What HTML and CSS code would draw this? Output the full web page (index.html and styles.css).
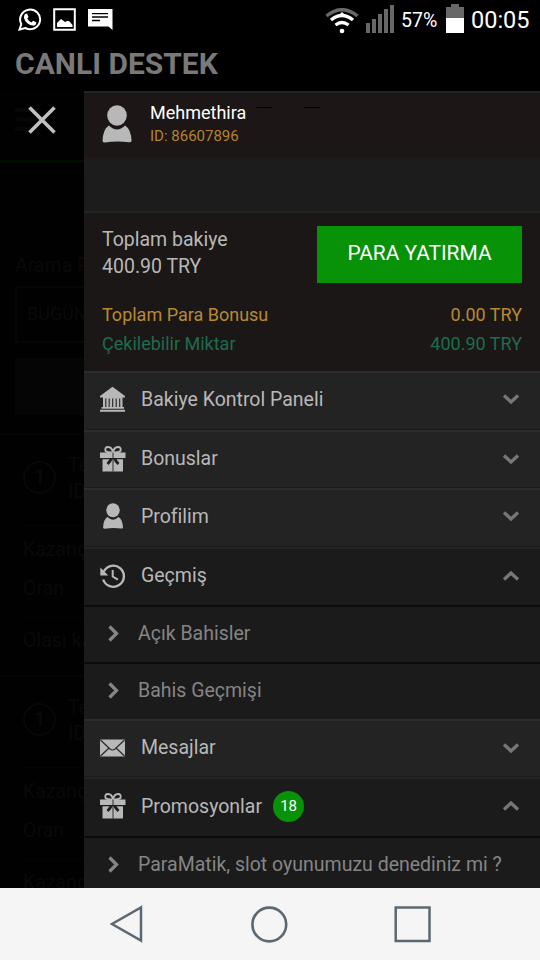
FILE: index.html
```html
<!DOCTYPE html>
<html lang="tr">
<head>
<meta charset="utf-8">
<title>Canlı Destek</title>
<link rel="stylesheet" href="styles.css">
</head>
<body>
<svg class="defs" aria-hidden="true">
  <symbol id="down" viewBox="0 0 18 12"><path d="M2 2.500l7 6.500 7-6.500" fill="none" stroke="currentColor" stroke-width="3.300"/></symbol>
  <symbol id="up" viewBox="0 0 18 12"><path d="M2 9.500l7-6.500 7 6.500" fill="none" stroke="currentColor" stroke-width="3.300"/></symbol>
  <symbol id="right" viewBox="0 0 11 17"><path d="M1.500 1.500L8.500 8.500l-7 7" fill="none" stroke="currentColor" stroke-width="3.300"/></symbol>
  <symbol id="user" viewBox="0 0 30 38"><ellipse cx="15" cy="10.500" rx="9.800" ry="10.300" fill="currentColor"/><path d="M7 20.500Q15 28.500 23 20.500Q29 24 29.600 36Q29 37.500 27 37.200Q15 35.500 3 37.500Q.8 37.500.5 36Q1 24 7 20.500Z" fill="currentColor"/></symbol>
  <symbol id="gift" viewBox="0 0 26 26"><path d="M0 6.500h25.500V12H0zM2.500 13.200h20.500v12.300h-20.500z" fill="currentColor"/><path d="M13 6.500Q7 6.500 5.500 5Q4.500 1 8 1Q12 1 13 6.500Q14 1 18 1Q21.500 1 20.500 5Q19 6.500 13 6.500Z" fill="none" stroke="currentColor" stroke-width="1.800"/><path d="M13 6.500v19" fill="none" stroke="#202020" stroke-width=".9"/><path d="M11.500 12.200Q10.500 15 7.500 18M14.500 12.200Q15.500 15 18.500 18" fill="none" stroke="#202020" stroke-width="2.800"/></symbol>
</svg>
<div class="phone">
  <header class="status">
    <div class="notes">
      <svg width="24" height="24" viewBox="0 0 24 24"><path d="M1.500 21.500l1.800-5.500a10 9.800 0 1 1 4 4z" fill="none" stroke="#fff" stroke-width="2"/><path d="M7 6l2-.5 1.500 3.500-1.200 1.500q1.500 3 4.200 4l1.500-1.800 3.200 1.600q.3 3-2.700 3.500Q8 17 6 10q-.2-2.500 1-4z" fill="#fff"/></svg>
      <svg width="23" height="23" viewBox="0 0 23 23"><path d="M1.200 1.200h20.600v20.600H1.200z" fill="none" stroke="#fff" stroke-width="2"/><path d="M4 19v-4l4-4 4 3 2-1h2l3.500 4v2z" fill="#fff"/></svg>
      <svg width="25" height="23" viewBox="0 0 25 23"><path d="M0 1h24.500v21l-4-3.500H0z" fill="#fff"/><path d="M4 5.700h16M4 9h16M4 12.500h8" stroke="#000" stroke-width="1.300"/></svg>
    </div>
    <div class="indicators">
      <svg width="34" height="26" viewBox="0 0 34 26"><path d="M1.500 8Q17-4.500 32.500 8" fill="none" stroke="#686868" stroke-width="3.500"/><path d="M6 12Q17 3 28 12M10.500 17Q17 12 23.500 17" fill="none" stroke="#fff" stroke-width="3.300"/><path d="M12 9l5-5 5 5z" fill="#fff"/><circle cx="17" cy="23" r="2.300" fill="#fff"/></svg>
      <svg class="signal" width="28" height="28" viewBox="0 0 28 28"><path d="M0 18h4v10H0zM6 14h4v14H6zM12 9h4v19h-4zM18 4h4v24h-4zM24 0h4v28h-4z" fill="#686868"/></svg>
      <span class="percent">57%</span>
      <svg class="battery" width="18" height="29" viewBox="0 0 18 29"><path d="M5 0h8v3h5v11H0V3h5z" fill="#686868"/><path d="M0 14h18v15H0z" fill="#fff"/></svg>
      <span class="clock">00:05</span>
    </div>
  </header>
  <h1 class="title">CANLI DESTEK</h1>
  <main class="content">
    <aside class="backdrop">
      <div class="close"><svg width="54" height="30" viewBox="0 0 54 30"><path d="M0 5h24M0 14.500h24M0 24h24" stroke="#070707" stroke-width="4"/><path d="M14.500 2.500l25 25M39.500 2.500l-25 25" stroke="#c0c0c0" stroke-width="3.600"/></svg></div>
      <div class="stripe"></div>
      <div class="search">Arama P</div>
      <div class="date">BUGÜN</div>
      <div class="submit"></div>
      <div class="bet"><div class="bethead"><b class="num">1</b><span>Te<br>ID</span></div><p>Kazanç</p><p>Oran</p><p class="possible">Olası ka</p></div>
      <div class="bet"><div class="bethead"><b class="num">1</b><span>Te<br>ID</span></div><p>Kazanç</p><p>Oran</p><p class="possible">Kazanç</p></div>
    </aside>
    <section class="drawer">
      <div class="profile">
        <svg width="30" height="38"><use href="#user"/></svg>
        <div><div class="name"><span>Mehmethira</span><i></i><i></i></div><div class="id">ID: 86607896</div></div>
      </div>
      <div class="gap"></div>
      <div class="balance">
        <div class="total"><div class="sum"><span class="label">Toplam bakiye</span><br><span class="amount">400.90 TRY</span></div><button><span>PARA YATIRMA</span></button></div>
        <div class="line bonus"><span>Toplam Para Bonusu</span><span>0.00 TRY</span></div>
        <div class="line draw"><span>Çekilebilir Miktar</span><span>400.90 TRY</span></div>
      </div>
      <nav>
        <div class="row h59"><svg class="ico" viewBox="0 0 26 26"><path d="M12.500 .8L25 10v1.500H0V10zM3 11h19.500v10H3zM1.500 21h22.500v1.800H1.500zM0 23.700h25v2H0z" fill="currentColor"/><path d="M5.800 12.500v8.500M9.200 12.500v8.500M12.700 12.500v8.500M16.200 12.500v8.500M19.700 12.500v8.500" stroke="#222" stroke-width="1.100"/></svg><span>Bakiye Kontrol Paneli</span><svg class="chev"><use href="#down"/></svg></div>
        <div class="row"><svg class="ico"><use href="#gift"/></svg><span>Bonuslar</span><svg class="chev"><use href="#down"/></svg></div>
        <div class="row h59"><svg class="ico person"><use href="#user"/></svg><span>Profilim</span><svg class="chev"><use href="#down"/></svg></div>
        <div class="row open"><svg class="ico" viewBox="0 0 26 26"><path d="M3.800 8.500A10.600 10.600 0 1 1 3.200 16.500" fill="none" stroke="currentColor" stroke-width="2.400"/><path d="M.3 4.500v8h8z" fill="currentColor"/><path d="M12.700 7v6.500l5.200 3.200" fill="none" stroke="currentColor" stroke-width="2"/></svg><span>Geçmiş</span><svg class="chev"><use href="#up"/></svg></div>
        <div class="sub"><svg><use href="#right"/></svg><span>Açık Bahisler</span></div>
        <div class="sub"><svg><use href="#right"/></svg><span>Bahis Geçmişi</span></div>
        <div class="row"><svg class="ico" viewBox="0 0 26 26"><path d="M0 4.500h25v17H0z" fill="currentColor"/><path d="M.5 5l9.500 9q2.500 2 5 0l9.500-9M.5 21l8.500-8M24.500 21l-8.500-8" fill="none" stroke="#282828" stroke-width="1.200"/></svg><span>Mesajlar</span><svg class="chev"><use href="#down"/></svg></div>
        <div class="row open h59 promo"><svg class="ico"><use href="#gift"/></svg><span>Promosyonlar</span><b class="badge">18</b><svg class="chev"><use href="#up"/></svg></div>
        <div class="sub last"><svg><use href="#right"/></svg><span>ParaMatik, slot oyunumuzu denediniz mi ?</span></div>
      </nav>
    </section>
  </main>
  <footer class="keys">
    <svg width="34" height="38" viewBox="0 0 34 38"><path d="M31 2.500v33L2 19z" fill="none" stroke="#5b6872" stroke-width="2.500"/></svg>
    <svg width="38" height="38" viewBox="0 0 38 38"><circle cx="19.300" cy="19.500" r="16.900" fill="none" stroke="#5b6872" stroke-width="2.600"/></svg>
    <svg width="38" height="38" viewBox="0 0 38 38"><path d="M1.700 2.500h33.800v33.600H1.700z" fill="none" stroke="#5b6872" stroke-width="2.500"/></svg>
  </footer>
</div>
</body>
</html>
```
FILE: styles.css
```css
* { box-sizing: border-box; }
body { margin: 0; background: #000; font-family: Roboto, sans-serif; }
svg { display: block; flex: none; }
.defs { display: none; }
.phone { width: 540px; height: 960px; overflow: hidden; display: flex; flex-direction: column; }
.status { height: 40px; flex: none; display: flex; justify-content: space-between; padding: 4px 11px 0 18px; color: #fff; }
.notes { display: flex; gap: 12px; padding-top: 4px; }
.notes svg:nth-child(2) { margin-left: -1px; }
.indicators { display: flex; }
.indicators > svg:first-child { margin: 4px 1px 0 -1px; }
.signal { margin: 1px 0 0 6px; }
.percent { width: 37px; margin-left: 7px; font-size: 19.600px; line-height: 33px; }
.battery { margin-left: 8px; }
.clock { width: 58px; margin-left: 7px; font-size: 23.500px; line-height: 32px; }
.title { height: 51px; flex: none; margin: 0; padding-left: 15px; color: #797979; font-size: 30px; line-height: 48px; font-weight: 700; white-space: nowrap; }
.content { height: 797px; flex: none; display: grid; grid-template-columns: 84px 456px; }
.backdrop { height: 797px; overflow: hidden; background: #010101; color: #090909; font-size: 19.500px; white-space: nowrap; }
.close { height: 69px; padding: 14px 0 0 15px; }
.stripe { height: 13px; border-top: 3px solid #000d00; border-bottom: 1px solid #050505; }
.search { height: 113px; padding: 81px 0 0 15px; line-height: 24px; }
.date { height: 57px; margin-left: 15px; padding-left: 10px; border: 2px solid #060606; border-right: 0; line-height: 52px; font-size: 18px; }
.submit { height: 57px; margin: 15px 0 18px 15px; background: #050505; }
.bet { height: 242px; padding-left: 23px; border-top: 2px solid #040404; }
.bethead { height: 91px; display: flex; gap: 12px; border-bottom: 1px solid #050505; }
.bethead span { padding-top: 18px; line-height: 26px; }
.num { flex: none; width: 33px; height: 33px; margin-top: 26px; border: 2px solid #080808; border-radius: 50%; text-align: center; line-height: 29px; }
.bet p { height: 39px; margin: 0; padding-top: 6px; line-height: 36px; }
.bet .possible { height: 58px; margin-top: 13px; padding-top: 0; border-top: 1px solid #050505; line-height: 45px; }
.drawer { height: 797px; overflow: hidden; background: #1c1c1c; }
.profile { height: 66px; display: flex; gap: 18px; padding: 12px 18px 0; background: #1c1716; border-top: 2px solid #242424; color: #b8b8b8; }
.name { height: 22px; display: flex; color: #fff; font-size: 18px; line-height: 19px; margin-top: -2px; }
.name span { width: 106px; }
.name i { width: 16px; height: 1px; margin: 4px 32px 0 0; background: #000; }
.id { color: #b5832e; font-size: 15px; line-height: 23px; }
.gap { height: 54px; }
.balance { height: 160px; padding: 13px 18px 0; background: #1b1716; border-top: 2px solid #242424; }
.total { display: flex; justify-content: space-between; height: 74px; }
.sum { color: #b8b8b8; font-size: 19.500px; line-height: 27px; }
button { width: 205px; height: 57px; padding: 0 0 3px; border: 0; background: #079207; color: #fff; font: 20.900px Roboto, sans-serif; }
.line { display: flex; justify-content: space-between; font-size: 18px; line-height: 29px; }
.bonus { color: #b88a32; }
.draw { color: #1d6c4d; }
.row { height: 58px; display: flex; align-items: center; padding: 0 20px 3px 16px; background: #232323; border-top: 2px solid #2d2d2d; box-shadow: inset 0 -1px #1b1b1b; color: #b8b8b8; font-size: 19.500px; }
.h59 { height: 59px; padding-bottom: 5px; }
.promo { padding-bottom: 3px; }
.open { background: #1b1b1b; border-top-color: #252525; }
.ico { width: 26px; height: 26px; margin-right: 15px; }
.chev { width: 18px; height: 12px; margin-left: auto; color: #777; }
.badge { width: 31px; height: 31px; margin-left: 11px; border-radius: 50%; background: #079207; color: #fff; font-size: 15px; font-weight: 400; line-height: 30px; text-align: center; }
.sub { height: 57px; display: flex; align-items: center; gap: 19px; padding: 0 0 3px 24px; border-top: 2px solid #0c0c0c; background: #1b1b1b; color: #858585; font-size: 19.500px; white-space: nowrap; }
.sub svg { width: 11px; height: 17px; }
.keys { height: 72px; flex: none; position: relative; display: grid; grid-template-columns: 34px 38px 38px; padding: 17px 0 0 110px; column-gap: 106px; background: #f5f5f5; }
```
